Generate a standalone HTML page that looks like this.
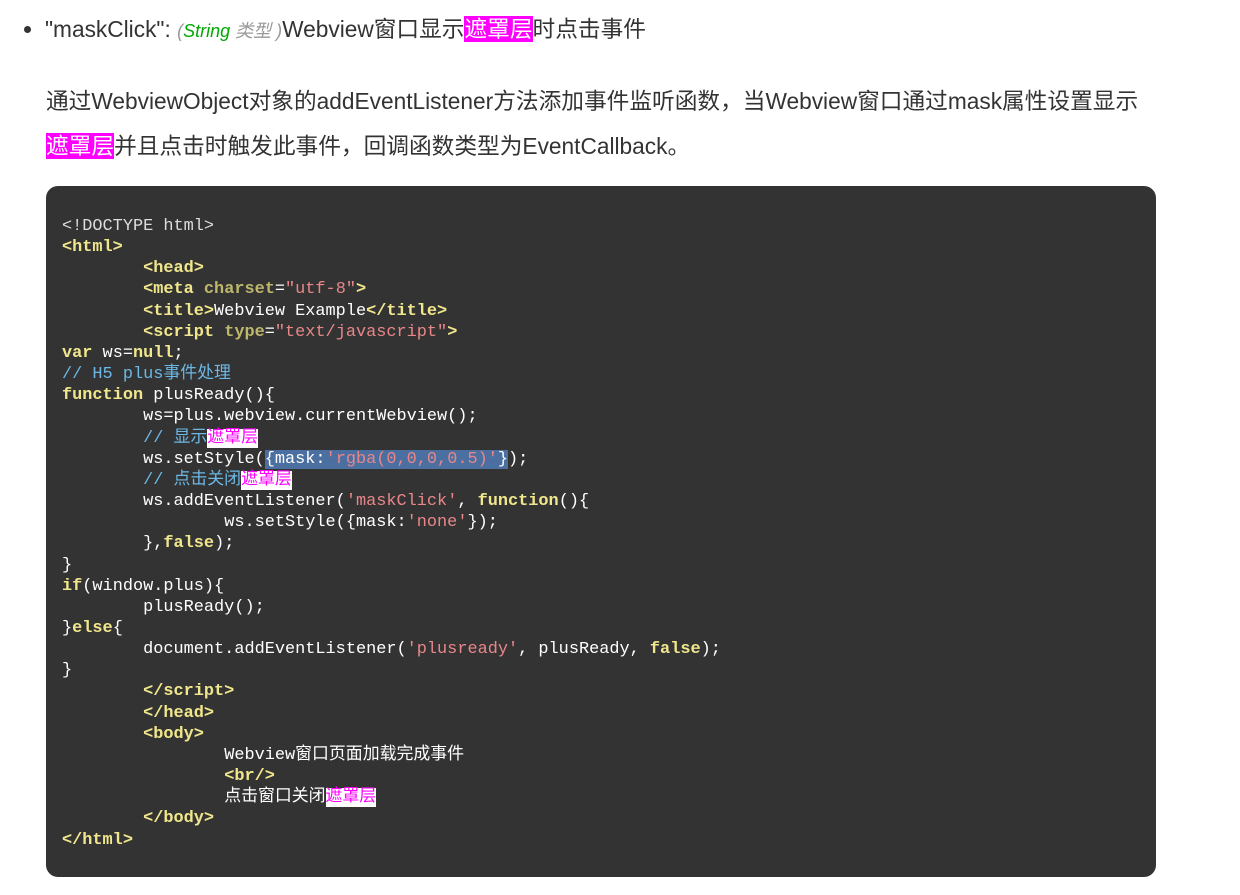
<!DOCTYPE html>
<html><head><meta charset="utf-8"><style>
body{margin:0;background:#fff;width:1240px;height:895px;overflow:hidden;font-family:"Liberation Sans","Noto Sans CJK SC",sans-serif;color:#333}
.l1{position:absolute;left:24px;top:11px;font-size:22.7px;white-space:nowrap}
.l1 .b{display:inline-block;width:7px;height:7px;border-radius:50%;background:#333;margin-right:14px;vertical-align:middle;position:relative;top:-2px}
.hl{background:#f0f;color:#fff}
.p{position:absolute;left:46px;font-size:22.7px;white-space:nowrap}
.box{position:absolute;left:46px;top:186px;width:1110px;height:691px;background:#333;border-radius:12px}
pre{position:absolute;left:62px;top:216px;margin:0;font-family:"Liberation Mono","Noto Sans CJK SC",monospace;font-size:16.9px;line-height:21.15px;color:#fff;tab-size:8;-moz-tab-size:8;letter-spacing:0}
.t{color:#f0e68c;font-weight:bold}
.a{color:#bdb76b;font-weight:bold}
.s{color:#e8878a}
.k{color:#f0e68c;font-weight:bold}
.c{color:#6cb8e6}
.w{background:#fff;color:#f0f}
.sel{background:#4a6fa0}
</style></head><body>
<div class="l1"><span class="b"></span>"maskClick": <i style="font-size:18px;color:#999">(<span style="color:#0a0">String</span> 类型 )</i>Webview窗口显示<span class="hl">遮罩层</span>时点击事件</div>
<div class="p" style="top:83px">通过WebviewObject对象的addEventListener方法添加事件监听函数，当Webview窗口通过mask属性设置显示</div>
<div class="p" style="top:128px"><span class="hl">遮罩层</span>并且点击时触发此事件，回调函数类型为EventCallback。</div>
<div class="box"></div>
<pre><span style="color:#ddd">&lt;!DOCTYPE html&gt;</span>
<span class="t">&lt;html&gt;</span>
	<span class="t">&lt;head&gt;</span>
	<span class="t">&lt;meta</span> <span class="a">charset</span>=<span class="s">"utf-8"</span><span class="t">&gt;</span>
	<span class="t">&lt;title&gt;</span>Webview Example<span class="t">&lt;/title&gt;</span>
	<span class="t">&lt;script</span> <span class="a">type</span>=<span class="s">"text/javascript"</span><span class="t">&gt;</span>
<span class="k">var</span> ws=<span class="k">null</span>;
<span class="c">// H5 plus事件处理</span>
<span class="k">function</span> plusReady(){
	ws=plus.webview.currentWebview();
	<span class="c">// 显示</span><span class="w">遮罩层</span>
	ws.setStyle(<span class="sel">{mask:<span class="s">'rgba(0,0,0,0.5)'</span>}</span>);
	<span class="c">// 点击关闭</span><span class="w">遮罩层</span>
	ws.addEventListener(<span class="s">'maskClick'</span>, <span class="k">function</span>(){
		ws.setStyle({mask:<span class="s">'none'</span>});
	},<span class="k">false</span>);
}
<span class="k">if</span>(window.plus){
	plusReady();
}<span class="k">else</span>{
	document.addEventListener(<span class="s">'plusready'</span>, plusReady, <span class="k">false</span>);
}
	<span class="t">&lt;/script&gt;</span>
	<span class="t">&lt;/head&gt;</span>
	<span class="t">&lt;body&gt;</span>
		Webview窗口页面加载完成事件
		<span class="t">&lt;br/&gt;</span>
		点击窗口关闭<span class="w">遮罩层</span>
	<span class="t">&lt;/body&gt;</span>
<span class="t">&lt;/html&gt;</span></pre>
</body></html>
